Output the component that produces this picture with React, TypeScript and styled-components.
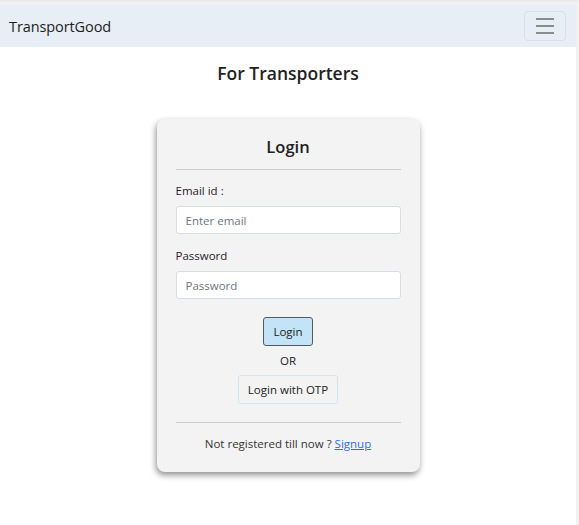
import React from 'react'
import styled, { createGlobalStyle } from 'styled-components'

const GlobalStyle = createGlobalStyle`
  html, body {
    margin: 0;
    padding: 0;
    background: #f1f1f1;
  }
  body {
    font-family: "Open Sans", "Noto Sans", sans-serif;
    color: #212529;
  }
  * {
    box-sizing: border-box;
  }
`

const Frame = styled.div`
  padding: 5px 3px 0 0;
  box-shadow: inset 0 4px 3px -3px rgba(0, 0, 0, 0.05);
`

const Page = styled.div`
  background: #fff;
  min-height: 520px;
`

const Navbar = styled.nav`
  height: 42px;
  background: #e7eef5;
  display: flex;
  align-items: center;
  justify-content: space-between;
  padding: 0 10px 0 9px;
`

const Brand = styled.span`
  font-size: 14.5px;
  color: #1d1d1d;
  letter-spacing: -0.1px;
`

const Toggler = styled.button`
  width: 42px;
  height: 30px;
  border: 1px solid #d9dfe4;
  border-radius: 4px;
  background: transparent;
  display: flex;
  flex-direction: column;
  align-items: center;
  justify-content: center;
  gap: 5px;
  padding: 0;
`

const Bar = styled.span`
  display: block;
  width: 18px;
  height: 2px;
  background: #8a8d90;
`

const Title = styled.h5`
  margin: 14px 0 0;
  text-align: center;
  font-size: 17.5px;
  font-weight: 600;
  color: #222;
`

const Card = styled.div`
  width: 263px;
  margin: 34px auto 0;
  background: #f3f3f3;
  border-radius: 8px;
  box-shadow: -1px 3px 6px rgba(0, 0, 0, 0.45);
  padding: 16px 19px 21px;
  display: flex;
  flex-direction: column;
`

const CardTitle = styled.h4`
  margin: 0;
  text-align: center;
  font-size: 16.5px;
  font-weight: 600;
  color: #222;
`

const Divider = styled.hr<{ $top: number }>`
  border: none;
  border-top: 1px solid #cfcfcf;
  margin: ${({ $top }) => $top}px 0 0;
`

const Label = styled.label<{ $top: number }>`
  display: block;
  font-size: 11.5px;
  color: #2b1a2b;
  margin-top: ${({ $top }) => $top}px;
`

const Input = styled.input`
  display: block;
  width: 100%;
  height: 28px;
  margin-top: 8px;
  border: 1px solid #d8dde2;
  border-radius: 3px;
  background: #fff;
  padding: 0 9px;
  font-family: inherit;
  font-size: 11.5px;
  &::placeholder {
    color: #6c757d;
  }
`

const Actions = styled.div`
  display: flex;
  flex-direction: column;
  align-items: center;
  margin-top: 18px;
`

const Button = styled.button<{ $primary?: boolean }>`
  font-family: inherit;
  font-size: 11.5px;
  color: #222;
  border-radius: 3px;
  height: 29px;
  padding: 0 9px;
  background: ${({ $primary }) => ($primary ? '#c3e4f6' : '#f3f3f3')};
  border: 1px solid ${({ $primary }) => ($primary ? '#555a5e' : '#cfe4f5')};
`

const Or = styled.span`
  font-size: 11.5px;
  color: #222;
  margin: 7px 0 6px;
  line-height: 16px;
`

const Footer = styled.p`
  margin: 13px 0 0;
  text-align: center;
  font-size: 11.5px;
  color: #333;
`

const Link = styled.a`
  color: #2b6fe0;
  text-decoration: underline;
`

export default function App() {
  return (
    <Frame>
      <GlobalStyle />
      <Page>
        <Navbar>
          <Brand>TransportGood</Brand>
          <Toggler aria-label="menu">
            <Bar />
            <Bar />
            <Bar />
          </Toggler>
        </Navbar>
        <Title>For Transporters</Title>
        <Card>
          <CardTitle>Login</CardTitle>
          <Divider $top={11} />
          <Label $top={13}>Email id :</Label>
          <Input placeholder="Enter email" />
          <Label $top={14}>Password</Label>
          <Input placeholder="Password" type="password" />
          <Actions>
            <Button $primary>Login</Button>
            <Or>OR</Or>
            <Button>Login with OTP</Button>
          </Actions>
          <Divider $top={18} />
          <Footer>
            Not registered till now ? <Link href="#">Signup</Link>
          </Footer>
        </Card>
      </Page>
    </Frame>
  )
}
